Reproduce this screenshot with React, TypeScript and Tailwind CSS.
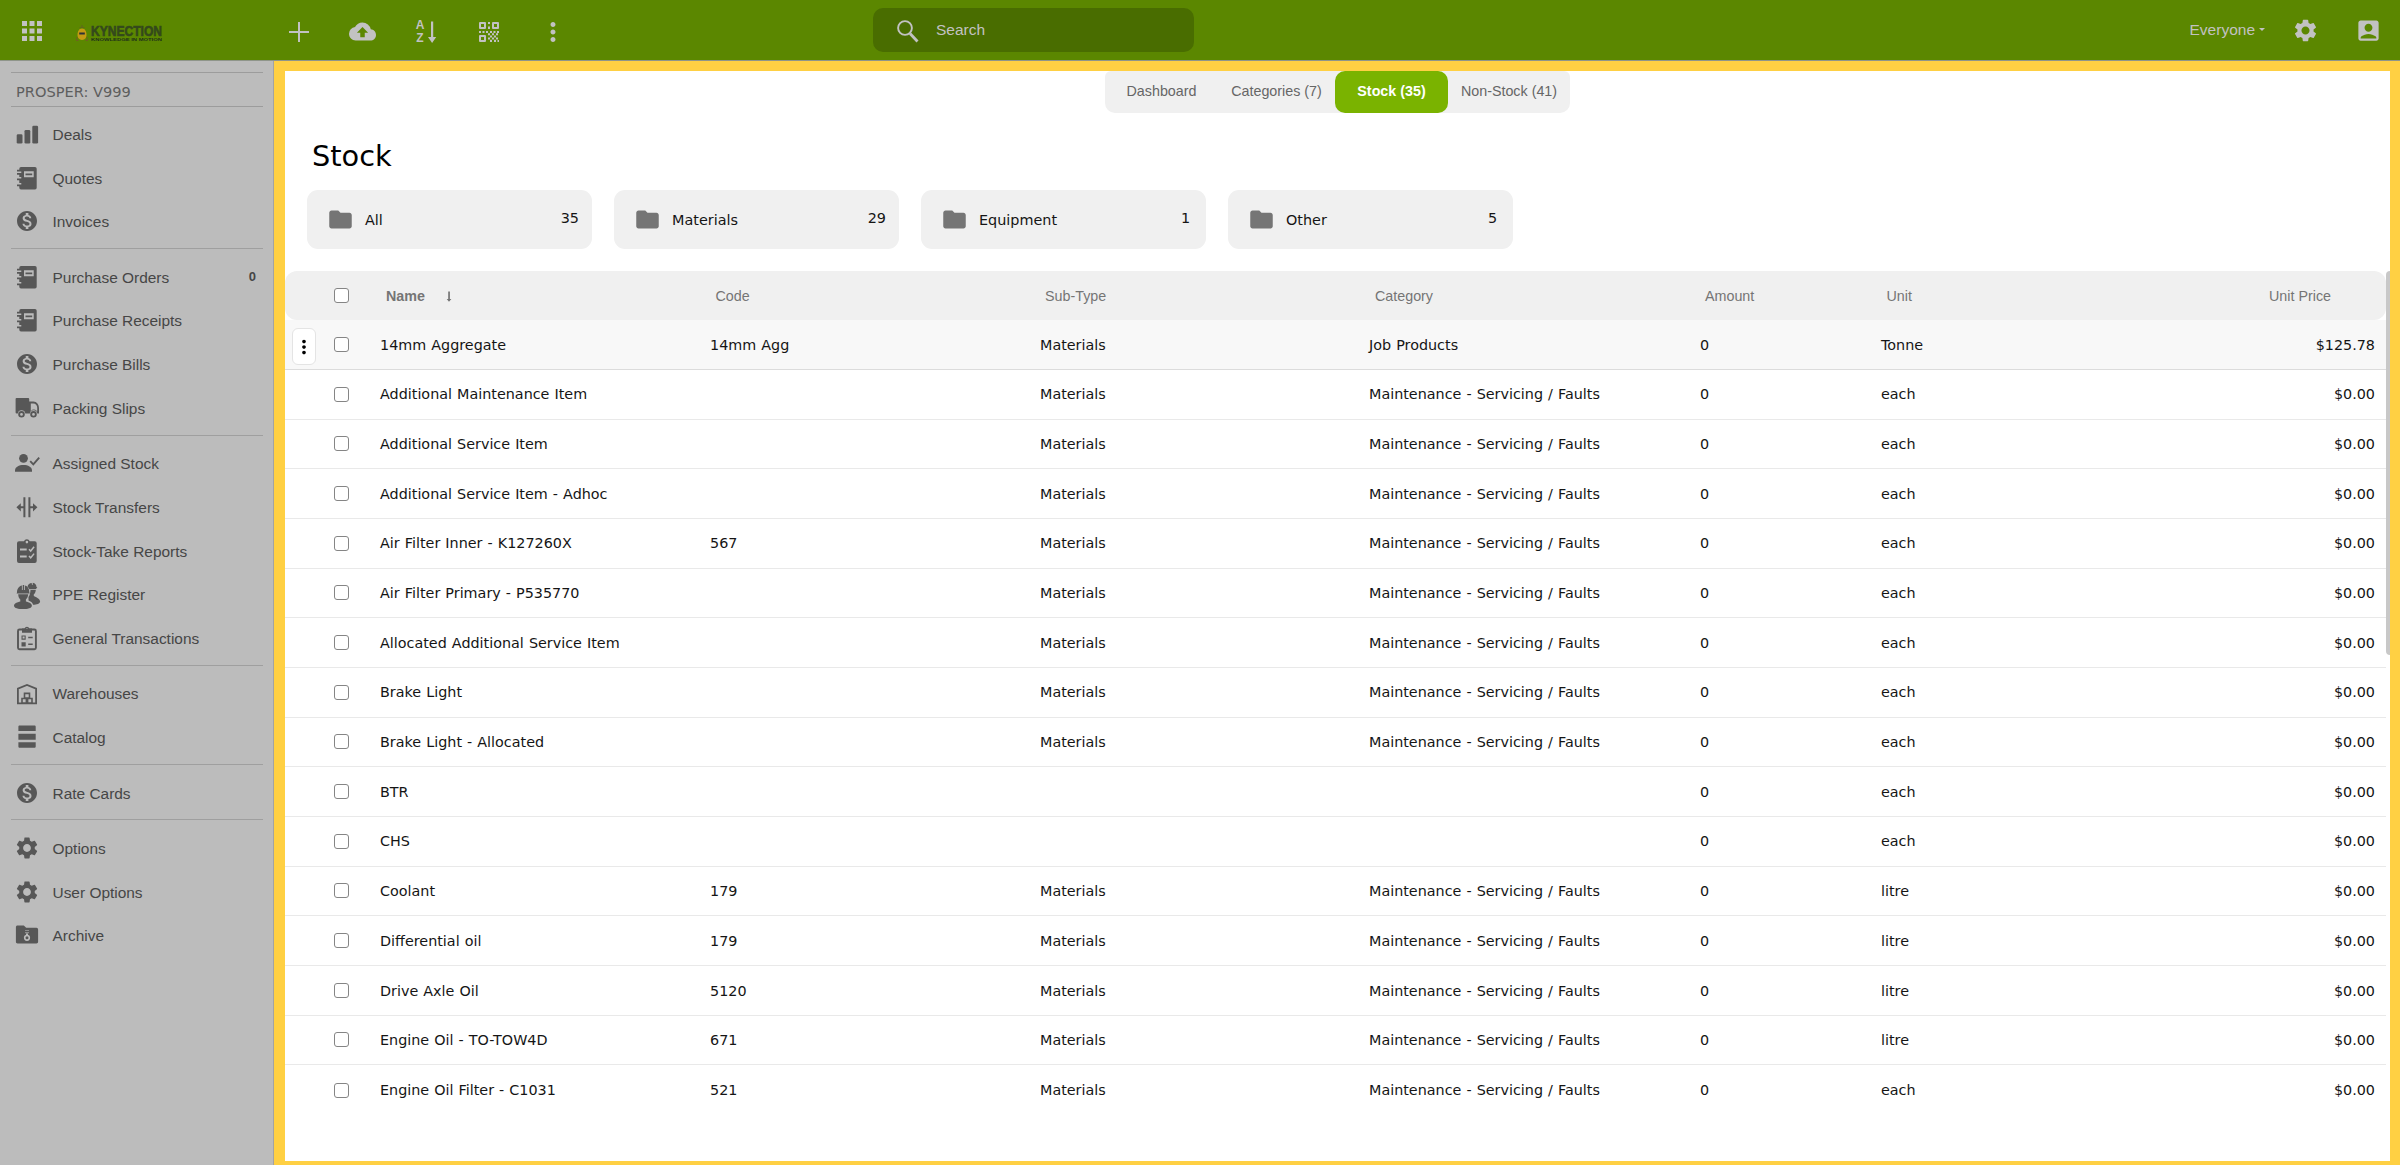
import { ReactNode } from 'react';
import { MdAccountBox, MdApps, MdBackup, MdFolder, MdMonetizationOn, MdMoreVert, MdSettings } from 'react-icons/md';

// sidebar glyphs are drawn on a 28px box
function Glyph({ children }: { children: ReactNode }) {
  return (
    <svg viewBox="0 0 28 28" className="h-7 w-7" fill="currentColor">
      {children}
    </svg>
  );
}

const DealsIcon = () => (
  <Glyph>
    <rect x="3.7" y="14.3" width="5.8" height="9.2" rx="1.3" />
    <rect x="11.5" y="10" width="5.8" height="13.5" rx="1.3" />
    <rect x="19.3" y="5.7" width="5.8" height="17.8" rx="1.3" />
  </Glyph>
);

const NotebookIcon = () => (
  <Glyph>
    <path
      fillRule="evenodd"
      d="M8 3h14a1.7 1.7 0 0 1 1.7 1.7v19a1.7 1.7 0 0 1-1.7 1.7H8a1.7 1.7 0 0 1-1.7-1.7v-1.5H4v-1.8h4.300v-1.500H6.300v-2.700H4v-1.800h4.300V13H6.300v-2.200H4V9h4.300V7.500H4V5.700h2.300v-1A1.700 1.700 0 0 1 8 3zM11 7.300v6h9.700v-6zM12.500 9.400h6.700v1.800h-6.700z"
    />
  </Glyph>
);

const DollarIcon = () => <MdMonetizationOn className="h-6 w-6" />;

const TruckIcon = () => (
  <Glyph>
    <path d="M3.500 4h11.700a1 1 0 0 1 1 1v14.500h-3.900a3.800 3.800 0 0 0-7.500 0H3.600a1 1 0 0 1-1-1V5a1 1 0 0 1 .9-1z" />
    <path fillRule="evenodd" d="M16 7.600h4.400c3.400 0 5.600 3 5.600 6.400v5.500h-1.700a3.800 3.800 0 0 0-7.500 0H16zM17.800 9.400v7.500a4 4 0 0 1 6.400.5v-3.600c0-2.600-1.600-4.400-3.900-4.400z" />
    <path fillRule="evenodd" d="M8.500 17a3.300 3.300 0 1 1 0 6.600 3.300 3.300 0 0 1 0-6.600zm0 2a1.400 1.400 0 1 0 0 2.800 1.400 1.400 0 0 0 0-2.800zM20.500 17a3.300 3.300 0 1 1 0 6.600 3.300 3.300 0 0 1 0-6.600zm0 2a1.400 1.400 0 1 0 0 2.800 1.400 1.400 0 0 0 0-2.800z" />
  </Glyph>
);

const AssignedIcon = () => (
  <Glyph>
    <circle cx="10.500" cy="9.300" r="4.400" />
    <path d="M2 22.700v-1.400c0-3.500 4-5.400 8.500-5.400s8.500 1.900 8.500 5.400v1.400z" />
    <path d="M17.200 12.200l3.100 3.100 5.900-6.600" fill="none" stroke="currentColor" strokeWidth="1.900" />
  </Glyph>
);

const TransferIcon = () => (
  <Glyph>
    <path d="M10.400 4.300h2v20h-2zM15.400 4.300h2v20h-2zM3.400 14.300l4.400-4.100v3.100h2.600v2H7.800v3.100zM24.400 14.300l-4.400-4.100v3.100h-2.600v2H20v3.100z" />
  </Glyph>
);

const StockTakeIcon = () => (
  <Glyph>
    <path
      fillRule="evenodd"
      d="M6 4.300h5a3 3 0 0 1 5.700 0h5a2 2 0 0 1 2 2V24a2 2 0 0 1-2 2H6a2 2 0 0 1-2-2V6.300a2 2 0 0 1 2-2zM13.900 3.800a1.300 1.300 0 1 0 0 2.600 1.300 1.300 0 0 0 0-2.600zM7 11.500v1.900h6.700v-1.900zM7 18.500v1.900h6.700v-1.900z"
    />
    <path d="M16 12.200l1.700 1.800 3.400-4.200M16 19l1.700 1.800 3.400-4.200" fill="none" stroke="#bcbcbc" strokeWidth="1.500" />
  </Glyph>
);

const CrewIcon = () => (
  <Glyph>
    <path d="M14.500 5.500a5 5 0 0 1 4.200-3.500l.3 2h.6l.2-2.300a4.500 4.500 0 0 1 3.700 4.300l.8.800-1.800 1.500h-6zM17.500 9h5.300c-.2 2.300-1 3.600-2 4.300v1.600c2.500 1.500 6 2.500 6.300 5.500.1 2-3.500 3.300-7 3.300-.5-2.200-2.600-3.300-4.600-4.200v-3.400c1.200-1.600 1.800-3.800 2-7.100z" />
    <path d="M4 11.600C4 7.700 6.200 5.300 8.900 4.600V9h.8V4h1.500v5h.8V4.600c2.700.7 4.300 3 4.300 7l.4 1H3.600z" />
    <path d="M5.200 13.300h10c-.2 2.500-1.100 4.200-2.300 5.200v2c3 1 6 1.700 6 4.200S14.500 28 10 28 1 27.200 1 24.700s3.300-3.200 6.300-4.200v-2c-1.200-1-2-2.700-2.100-5.200z" />
  </Glyph>
);

const TransactionsIcon = () => (
  <Glyph>
    <rect x="5" y="5.500" width="17.900" height="19.800" rx="1.500" fill="none" stroke="currentColor" strokeWidth="1.900" />
    <path fillRule="evenodd" d="M9 4.500h2.500a2.600 2.600 0 0 1 4.900 0H19v4.300H9zM13.900 4a1.100 1.100 0 1 0 0 2.200 1.100 1.100 0 0 0 0-2.200zM8.500 11.500h4.200v4.200H8.500zm1.100 1.100v2h2v-2z" />
    <path d="M8.500 18.200h4.200v4.200H8.500zM15.200 12.800h4.500v1.500h-4.500zM15.200 19.500h4.500V21h-4.500z" />
  </Glyph>
);

const WarehouseIcon = () => (
  <Glyph>
    <path d="M4.900 23.400V8.600L14 4.900l9.100 3.700v14.800z" fill="none" stroke="currentColor" strokeWidth="1.800" />
    <path d="M11.500 13.400h5v4.700h-5zM9 18.500h4.400v4.700H9zM14.600 18.500H19v4.700h-4.400z" fill="none" stroke="currentColor" strokeWidth="1.600" />
  </Glyph>
);

const CatalogIcon = () => (
  <Glyph>
    <path d="M6.700 2.400h14.700c.8 0 1.300.5 1.300 1.200v4.300H5.400V3.600c0-.7.5-1.200 1.300-1.200zM5.400 10.800h17.300v6H5.400zM5.400 19.300h17.300v4.200c0 .7-.5 1.300-1.300 1.300H6.700c-.8 0-1.300-.6-1.300-1.300z" />
  </Glyph>
);

const GearIcon = () => <MdSettings className="h-[26px] w-[26px]" />;

const ArchiveIcon = () => (
  <Glyph>
    <path d="M4.600 4.500h6.200l2.400 2.300h10.200c1 0 1.700.7 1.700 1.700v12.300c0 1-.7 1.700-1.700 1.700H4.600c-1 0-1.700-.7-1.700-1.700V6.200c0-1 .7-1.700 1.700-1.700z" />
    <path d="M12 9.500h4M12 11.600h4" stroke="#8d8d8d" strokeWidth="1.200" />
    <path d="M13 13.200h2" stroke="#bcbcbc" strokeWidth="1.500" />
    <circle cx="14" cy="16.800" r="2.300" fill="none" stroke="#bcbcbc" strokeWidth="1.600" />
  </Glyph>
);

const menu = [
  [
    { label: 'Deals', icon: DealsIcon },
    { label: 'Quotes', icon: NotebookIcon },
    { label: 'Invoices', icon: DollarIcon },
  ],
  [
    { label: 'Purchase Orders', icon: NotebookIcon, count: '0' },
    { label: 'Purchase Receipts', icon: NotebookIcon },
    { label: 'Purchase Bills', icon: DollarIcon },
    { label: 'Packing Slips', icon: TruckIcon },
  ],
  [
    { label: 'Assigned Stock', icon: AssignedIcon },
    { label: 'Stock Transfers', icon: TransferIcon },
    { label: 'Stock-Take Reports', icon: StockTakeIcon },
    { label: 'PPE Register', icon: CrewIcon },
    { label: 'General Transactions', icon: TransactionsIcon },
  ],
  [
    { label: 'Warehouses', icon: WarehouseIcon },
    { label: 'Catalog', icon: CatalogIcon },
  ],
  [{ label: 'Rate Cards', icon: DollarIcon }],
  [
    { label: 'Options', icon: GearIcon },
    { label: 'User Options', icon: GearIcon },
    { label: 'Archive', icon: ArchiveIcon },
  ],
] as { label: string; icon: () => ReactNode; count?: string }[][];

const folders = [
  { name: 'All', count: 35 },
  { name: 'Materials', count: 29 },
  { name: 'Equipment', count: 1 },
  { name: 'Other', count: 5 },
];

const servicing = 'Maintenance - Servicing / Faults';

// name, code, sub-type, category, amount, unit, price
const rows = [
  ['14mm Aggregate', '14mm Agg', 'Materials', 'Job Products', '0', 'Tonne', '$125.78'],
  ['Additional Maintenance Item', '', 'Materials', servicing, '0', 'each', '$0.00'],
  ['Additional Service Item', '', 'Materials', servicing, '0', 'each', '$0.00'],
  ['Additional Service Item - Adhoc', '', 'Materials', servicing, '0', 'each', '$0.00'],
  ['Air Filter Inner - K127260X', '567', 'Materials', servicing, '0', 'each', '$0.00'],
  ['Air Filter Primary - P535770', '', 'Materials', servicing, '0', 'each', '$0.00'],
  ['Allocated Additional Service Item', '', 'Materials', servicing, '0', 'each', '$0.00'],
  ['Brake Light', '', 'Materials', servicing, '0', 'each', '$0.00'],
  ['Brake Light - Allocated', '', 'Materials', servicing, '0', 'each', '$0.00'],
  ['BTR', '', '', '', '0', 'each', '$0.00'],
  ['CHS', '', '', '', '0', 'each', '$0.00'],
  ['Coolant', '179', 'Materials', servicing, '0', 'litre', '$0.00'],
  ['Differential oil', '179', 'Materials', servicing, '0', 'litre', '$0.00'],
  ['Drive Axle Oil', '5120', 'Materials', servicing, '0', 'litre', '$0.00'],
  ['Engine Oil - TO-TOW4D', '671', 'Materials', servicing, '0', 'litre', '$0.00'],
  ['Engine Oil Filter - C1031', '521', 'Materials', servicing, '0', 'each', '$0.00'],
];

const grid = 'grid grid-cols-[95px_330px_330px_329px_331px_181px_1fr] items-center';

function Checkbox() {
  return <span className="ml-[48.500px] block h-[15px] w-[15px] rounded-[3px] border-[1.5px] border-[#858585] bg-white" />;
}

function Logo() {
  return (
    <div className="ml-[29px] mt-[4px] flex w-[88px] items-center">
      <svg viewBox="0 0 12 18" className="h-[18px] w-3 shrink-0" fill="none">
        <path d="M6 1v3M3.500 3.500h5" stroke="#5f6a1c" strokeWidth="1.200" />
        <path d="M6 4.500c3 0 4.500 3 4.500 6.300 0 3-1.500 5.200-4.500 5.200s-4.500-2.200-4.500-5.200C1.500 7.500 3 4.500 6 4.500z" fill="#c59a12" />
        <path d="M3.200 8.500h5.600v2H3.200z" fill="#2c3038" />
        <path d="M1 13l-.5 3.500h2M11 13l.5 3.500h-2" stroke="#6f6420" strokeWidth="1.200" />
      </svg>
      <svg viewBox="0 0 74 28" className="ml-[2px] h-7 w-[74px] shrink-0" fill="#34491c" fontFamily="Liberation Sans, sans-serif" fontWeight="700">
        <text x="1" y="17" fontSize="14" textLength="71" lengthAdjust="spacingAndGlyphs" stroke="#34491c" strokeWidth="0.600">
          KYNECTION
        </text>
        <text x="1" y="21.500" fontSize="4.200" textLength="71" lengthAdjust="spacingAndGlyphs" fill="#20301a">
          KNOWLEDGE IN MOTION
        </text>
      </svg>
    </div>
  );
}

function TopBar() {
  return (
    <header className="flex h-[61px] items-center border-b border-[#8f958a] bg-[#5b8700] pt-px text-[#c2c2c2]">
      <MdApps className="ml-[17px] h-[30px] w-[30px]" />
      <Logo />
      <div className="ml-[121px] flex items-center pt-[2px]">
        <svg viewBox="0 0 28 28" className="h-7 w-7" fill="currentColor">
          <path d="M13 4h2v9h9v2h-9v9h-2v-9H4v-2h9z" />
        </svg>
        <MdBackup className="ml-[36px] h-[27px] w-[27px]" />
        <div className="ml-[36px] flex h-7 w-7 items-center">
          <div className="flex w-3 flex-col items-center pl-1 font-['Liberation_Sans'] text-[12px] font-bold leading-[13px]">
            <span>A</span>
            <span>Z</span>
          </div>
          <svg viewBox="0 0 10 24" className="ml-[3px] h-6 w-[10px] shrink-0" fill="currentColor">
            <path d="M4 1.500h2.200V17h3L5.100 23 1 17h3z" />
          </svg>
        </div>
        <svg viewBox="0 0 20 20" className="ml-[39px] h-5 w-5" fill="currentColor" fillRule="evenodd">
          <path d="M1 0h5a1 1 0 0 1 1 1v5a1 1 0 0 1-1 1H1a1 1 0 0 1-1-1V1a1 1 0 0 1 1-1zm1 2v3h3V2zM14 0h5a1 1 0 0 1 1 1v5a1 1 0 0 1-1 1h-5a1 1 0 0 1-1-1V1a1 1 0 0 1 1-1zm1 2v3h3V2zM1 13h5a1 1 0 0 1 1 1v5a1 1 0 0 1-1 1H1a1 1 0 0 1-1-1v-5a1 1 0 0 1 1-1zm1 2v3h3v-3z" />
          <path d="M9 0h2v2H9zM9 4.500h2v2.500H9zM0 9h2v2H0zM3.500 9h2v2h-2zM7 9h2v2H7zM11 9h2v2h-2zM14.500 9h2v2h-2zM18 9h2v2h-2zM9 11.200h2v2H9zM13 11.200h2v2h-2zM17 11.200h2v2h-2zM11 13.400h2v2h-2zM15 13.400h2v2h-2zM9 15.600h2v2H9zM13 15.600h2v2h-2zM17 15.600h2v2h-2zM11 17.800h2V20h-2zM15 17.800h2V20h-2zM18.500 18h1.500v2h-1.500z" />
        </svg>
        <MdMoreVert className="ml-[39px] h-[30px] w-[30px]" />
      </div>
      <div className="mb-px ml-[305px] flex h-11 w-[321px] items-center rounded-[10px] bg-[#496d00] pl-6">
        <svg viewBox="0 0 22 23" className="mt-[2px] h-[23px] w-[22px]" fill="none" stroke="currentColor">
          <circle cx="8" cy="8" r="6.900" strokeWidth="1.900" />
          <path d="M13 13.500l7.500 8" strokeWidth="2.800" />
        </svg>
        <span className="ml-[17px] text-[15.500px]">Search</span>
      </div>
      <div className="ml-auto flex items-center">
        <span className="mb-px text-[15.500px]">Everyone</span>
        <span className="mb-[3px] ml-1 border-x-[3px] border-t-[3px] border-x-transparent border-t-current" />
        <MdSettings className="ml-[27px] h-[27px] w-[27px]" />
        <MdAccountBox className="ml-[36px] mr-[18px] h-[27px] w-[27px]" />
      </div>
    </header>
  );
}

function Sidebar() {
  return (
    <aside className="w-[274px] shrink-0 border-r border-[#a3a3a3] bg-[#bcbcbc] pl-[11px] pr-[10px] pt-[11px] text-[#464646]">
      <div className="mb-[5px] flex h-[35px] items-center border-y border-[#9c9c9c] pl-[5px] pt-[5px] font-['DejaVu_Sans'] text-[14.600px] text-[#5e5e5e]">
        PROSPER: V999
      </div>
      {menu.map((group, i) => (
        <div key={i}>
          {i > 0 && <hr className="mb-[5.500px] mt-[5px] border-t border-[#9f9f9f]" />}
          {group.map(({ label, icon: Icon, count }) => (
            <div key={label} className="flex h-[43.770px] items-center">
              <div className="ml-[2px] flex w-7 justify-center text-[#575757]">
                <Icon />
              </div>
              <span className="ml-[11.500px] pt-px text-[15.450px]">{label}</span>
              {count && <span className="ml-auto mr-[7px] pt-px text-[13px] font-bold">{count}</span>}
            </div>
          ))}
        </div>
      ))}
    </aside>
  );
}

function Tabs() {
  return (
    <nav className="ml-[820px] flex h-[42px] w-[465px] items-center rounded-[10px] rounded-t-[6px] bg-[#f0f0f0] text-[14.300px] text-[#666]">
      <span className="w-[113px] text-center">Dashboard</span>
      <span className="w-[117px] text-center">Categories (7)</span>
      <span className="flex h-full w-[113px] items-center justify-center rounded-[10px] bg-[#7ab300] font-bold text-white">Stock (35)</span>
      <span className="w-[122px] text-center">Non-Stock (41)</span>
    </nav>
  );
}

function StockTable() {
  return (
    <div className="mt-[22px] flex">
      <div className="w-[2101px]">
        <div className={`${grid} h-[49.700px] rounded-xl bg-[#f0f0f0] text-[14.300px] text-[#757575]`}>
          <Checkbox />
          <span className="flex items-center pl-[6px] pt-[3px] font-bold">
            Name
            <svg viewBox="0 0 6 12" className="ml-[21px] h-3 w-[6px]" fill="currentColor">
              <path d="M2.200 .5h1.700v7.500h1.500L3 10.800 .700 8h1.500z" />
            </svg>
          </span>
          <span className="pl-[5.500px] pt-[3px]">Code</span>
          <span className="pl-[5px] pt-[3px]">Sub-Type</span>
          <span className="pl-[6px] pt-[3px]">Category</span>
          <span className="pl-[5px] pt-[3px]">Amount</span>
          <span className="flex justify-between pl-[5.500px] pr-[55px] pt-[3px]">
            <span>Unit</span>
            <span>Unit Price</span>
          </span>
        </div>
        {rows.map((row, i) => (
          <div
            key={row[0]}
            className={`${grid} relative h-[49.680px] font-['DejaVu_Sans'] text-[14.350px] text-[#151515] [word-spacing:0.5px] ${
              i === 0 ? 'border-b border-[#dcdcdc] bg-[#f8f8f8]' : i < rows.length - 1 ? 'border-b border-[#e9e9e9]' : ''
            }`}
          >
            {i === 0 && (
              <span className="absolute left-[7px] top-[8px] flex h-[37px] w-6 items-center justify-center rounded-md border border-[#e4e4e4] bg-white text-black">
                <MdMoreVert className="h-6 w-6" />
              </span>
            )}
            <Checkbox />
            {row.slice(0, 5).map((cell, j) => (
              <span key={j} className="whitespace-nowrap pt-[2px]">{cell}</span>
            ))}
            <span className="flex justify-between pr-[11px] pt-[2px]">
              <span>{row[5]}</span>
              <span>{row[6]}</span>
            </span>
          </div>
        ))}
      </div>
      <div className="h-[384px] w-[4px] rounded-l-[4px] bg-[#c8c8c8]" />
    </div>
  );
}

export default function App() {
  return (
    <div className="flex h-[1165px] w-[2400px] flex-col overflow-hidden font-['Liberation_Sans',sans-serif]">
      <TopBar />
      <div className="flex min-h-0 flex-1">
        <Sidebar />
        <main className="flex-1 overflow-hidden border-[10px] border-b-4 border-l-[11px] border-[#ffd043] bg-white">
          <Tabs />
          <h1 className="ml-[27px] mt-[23px] font-['DejaVu_Sans'] text-[28.800px] leading-[40px] text-black">Stock</h1>
          <div className="ml-[22px] mt-[14px] flex gap-[22px]">
            {folders.map((folder) => (
              <div key={folder.name} className="flex h-[58.500px] w-[285px] items-center rounded-[11px] bg-[#f0f0f0] pl-5 pr-[13px] font-['DejaVu_Sans'] text-[14.400px] text-[#151515]">
                <MdFolder className="h-[27px] w-[27px] text-[#757575]" />
                <span className="ml-[11px] pt-[3px]">{folder.name}</span>
                <span className="mb-px ml-auto min-w-3 text-left">{folder.count}</span>
              </div>
            ))}
          </div>
          <StockTable />
        </main>
      </div>
    </div>
  );
}
